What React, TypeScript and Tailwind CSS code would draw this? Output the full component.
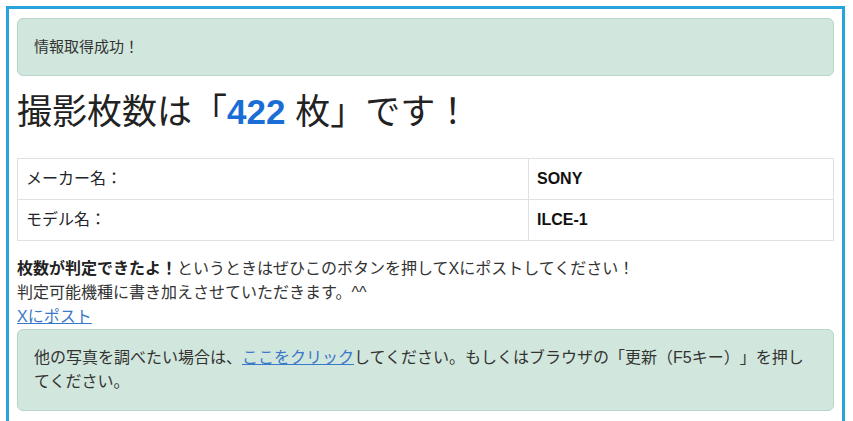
export default function App() {
  const font = {
    fontFamily: '"Liberation Sans", Arial, "Noto Sans CJK JP", sans-serif',
  };
  return (
    <div className="min-h-screen bg-white pl-[6px] pt-[6px] [text-spacing-trim:space-all]" style={font}>
      <div className="w-[839px] h-[420px] border-[3px] border-b-0 border-[#27a4dc] px-[8px] pt-[9px] text-[#212529] text-[16px] leading-[24px]">
        <div className="rounded-[6px] border border-[#b8d6c7] bg-[#d1e6dc] px-[16px] py-[16px] text-[15px] leading-[24px] text-[#333]">
          情報取得成功！
        </div>
        <h1 className="mt-[15px] mb-[25px] text-[35px] leading-[42px] font-normal text-[#222]">
          撮影枚数は「<span className="font-bold text-[#1b6dd6]">422</span> 枚」です！
        </h1>
        <table className="w-full border-collapse border border-[#dee2e6]">
          <tbody>
            <tr>
              <td className="w-[511px] border border-[#dee2e6] px-[8px] py-[8px]">メーカー名：</td>
              <td className="border border-[#dee2e6] px-[8px] py-[8px] font-bold text-[#111]">SONY</td>
            </tr>
            <tr>
              <td className="border border-[#dee2e6] px-[8px] py-[8px]">モデル名：</td>
              <td className="border border-[#dee2e6] px-[8px] py-[8px] font-bold text-[#111]">ILCE-1</td>
            </tr>
          </tbody>
        </table>
        <p className="mt-[16px] text-[#333]">
          <b className="text-[#222]">枚数が判定できたよ！</b>というときはぜひこのボタンを押してXにポストしてください！
          <br />
          判定可能機種に書き加えさせていただきます。^^
          <br />
          <a href="#" className="text-[#3a78c9] underline">Xにポスト</a>
        </p>
        <div className="rounded-[6px] border border-[#b8d6c7] bg-[#d1e6dc] px-[16px] py-[16px] text-[#333]">
          他の写真を調べたい場合は、<a href="#" className="text-[#3a78c9] underline">ここをクリック</a>してください。もしくはブラウザの「更新（F5キー）」を押してください。
        </div>
      </div>
    </div>
  );
}
